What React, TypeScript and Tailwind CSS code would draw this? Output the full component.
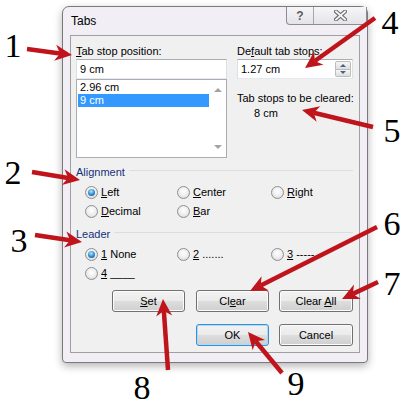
import React from "react";

type Pt = { x1: number; y1: number; x2: number; y2: number };

const ARROWS: Pt[] = [
  { x1: 27, y1: 49, x2: 72, y2: 55 },
  { x1: 32, y1: 172, x2: 80, y2: 180 },
  { x1: 35, y1: 235, x2: 82, y2: 242 },
  { x1: 375, y1: 18, x2: 305, y2: 68 },
  { x1: 373, y1: 127, x2: 302, y2: 110 },
  { x1: 377, y1: 227, x2: 250, y2: 291 },
  { x1: 378, y1: 282, x2: 342, y2: 299 },
  { x1: 168, y1: 370, x2: 163, y2: 299 },
  { x1: 282, y1: 373, x2: 248, y2: 332 },
];

const NUMBERS = [
  { n: "1", cx: 13, top: 29 },
  { n: "2", cx: 13, top: 156 },
  { n: "3", cx: 19, top: 224 },
  { n: "4", cx: 390, top: 6 },
  { n: "5", cx: 392, top: 114 },
  { n: "6", cx: 392, top: 207 },
  { n: "7", cx: 392, top: 267 },
  { n: "8", cx: 142, top: 371 },
  { n: "9", cx: 296, top: 367 },
];

function Arrow({ x1, y1, x2, y2 }: Pt) {
  const dx = x2 - x1;
  const dy = y2 - y1;
  const len = Math.hypot(dx, dy);
  const ux = dx / len;
  const uy = dy / len;
  const nx = -uy;
  const ny = ux;
  const L = 17;
  const W = 8;
  const bx = x2 - ux * L;
  const by = y2 - uy * L;
  const mx = x2 - ux * (L - 5);
  const my = y2 - uy * (L - 5);
  const pts = [
    [x2, y2],
    [bx + nx * W, by + ny * W],
    [mx, my],
    [bx - nx * W, by - ny * W],
  ]
    .map((p) => p.join(","))
    .join(" ");
  return (
    <g>
      <line x1={x1} y1={y1} x2={mx} y2={my} stroke="#c0141c" strokeWidth="4.5" strokeLinecap="butt" />
      <polygon points={pts} fill="#c0141c" />
    </g>
  );
}

function Radio({ checked }: { checked?: boolean }) {
  return (
    <span className="w-[13px] h-[13px] rounded-full border border-[#8e8f8f] bg-[radial-gradient(circle_at_50%_40%,#ffffff,#ececec_55%,#cdcdcd)] flex items-center justify-center shrink-0">
      {checked && (
        <span className="w-[7px] h-[7px] rounded-full bg-[radial-gradient(circle_at_45%_35%,#b5e8fc,#2a8ad4_55%,#0c3f70)]" />
      )}
    </span>
  );
}

function Option({ checked, children }: { checked?: boolean; children: React.ReactNode }) {
  return (
    <div className="flex items-center gap-[3px]">
      <Radio checked={checked} />
      <span className="leading-[15px]">{children}</span>
    </div>
  );
}

function Btn({ children, def, className }: { children: React.ReactNode; def?: boolean; className?: string }) {
  return (
    <div
      className={
        "h-[22px] flex items-center justify-center rounded-[3px] border bg-[linear-gradient(180deg,#f2f2f2_0%,#ebebeb_48%,#dddddd_52%,#cfcfcf_100%)] " +
        (def
          ? "border-[#3c8fd1] shadow-[inset_0_0_0_1px_#a6dcf8] "
          : "border-[#707070] shadow-[inset_0_0_0_1px_#fcfcfc] ") +
        (className ?? "")
      }
    >
      {children}
    </div>
  );
}

function Header({ label }: { label: string }) {
  return (
    <div className="h-[16px] flex items-center">
      <span className="leading-[16px] text-[#15307a]">{label}</span>
      <div className="flex-1 h-px bg-[#d5dfe5] ml-[4px] mb-[3px]" />
    </div>
  );
}

export default function App() {
  return (
    <div className="relative w-[411px] h-[409px] bg-white overflow-hidden font-['Liberation_Sans',Arial,sans-serif] text-[11px] text-black">
      <div className="pl-[62px] pt-[6px]">
        {/* window frame */}
        <div className="relative w-[306px] h-[357px] rounded-t-[7px] rounded-b-[4px] border border-[#7a7a7a] bg-[#f1eff5] shadow-[0_3px_8px_rgba(0,0,0,0.3)]">
          <div className="h-[28px] pl-[8px] pt-[7px] leading-[15px] text-[12px]">Tabs</div>

          {/* caption buttons */}
          <div className="absolute top-0 right-0 h-[18px] flex border border-t-0 border-[#8d8d8d] rounded-b-[4px] overflow-hidden bg-[linear-gradient(180deg,#f6f6f8,#e4e3ea)]">
            <div className="w-[27px] flex items-center justify-center border-r border-[#a6a6a6] font-bold text-[12px] text-[#5c5c5c] leading-none">
              ?
            </div>
            <div className="w-[52px] flex items-center justify-center">
              <svg width="13" height="11" viewBox="0 0 13 11">
                <path d="M2 1.5 L11 9.5 M11 1.5 L2 9.5" stroke="#6e6e6e" strokeWidth="4" strokeLinecap="square" />
                <path d="M2 1.5 L11 9.5 M11 1.5 L2 9.5" stroke="#f4f4f4" strokeWidth="1.8" strokeLinecap="square" />
              </svg>
            </div>
          </div>

          {/* client area */}
          <div className="ml-[7px] w-[290px] h-[318px] border border-[#a0a0a0] bg-[#f0f0f0] pl-[5px] pr-[6px] pt-[7px]">
            <div className="flex">
              <div className="w-[151px]">
                <div className="h-[16px] leading-[16px]">
                  <u>T</u>ab stop position:
                </div>
                <div className="h-[20px] border border-[#abadb3] border-b-[#e3e9ef] border-x-[#dbdfe6] bg-white pl-[3px] leading-[18px]">
                  9 cm
                </div>
                <div className="h-[79px] border border-[#abadb3] bg-white flex">
                  <div className="flex-1 pt-[1px] pl-[1px]">
                    <div className="h-[13px] leading-[13px] pl-[2px]">2.96 cm</div>
                    <div className="h-[13px] leading-[13px] pl-[2px] bg-[#3399ff] text-white">9 cm</div>
                  </div>
                  <div className="w-[17px] flex flex-col items-center justify-between py-[8px]">
                    <span className="w-0 h-0 border-x-[4px] border-x-transparent border-b-[4px] border-b-[#a3a3a3]" />
                    <span className="w-0 h-0 border-x-[4px] border-x-transparent border-t-[4px] border-t-[#a3a3a3]" />
                  </div>
                </div>
              </div>

              <div className="ml-[10px] w-[116px]">
                <div className="h-[16px] leading-[16px]">
                  De<u>f</u>ault tab stops:
                </div>
                <div className="h-[20px] border border-[#abadb3] border-b-[#e3e9ef] border-x-[#dbdfe6] bg-white flex">
                  <span className="flex-1 pl-[3px] leading-[18px]">1.27 cm</span>
                  <div className="w-[16px] my-[1px] mr-[1px] flex flex-col">
                    <div className="flex-1 border border-[#bcbcbc] rounded-t-[2px] bg-[linear-gradient(#f6f6f6,#dedede)] flex items-center justify-center">
                      <span className="w-0 h-0 border-x-[3px] border-x-transparent border-b-[3px] border-b-[#4d6185]" />
                    </div>
                    <div className="flex-1 border border-t-0 border-[#bcbcbc] rounded-b-[2px] bg-[linear-gradient(#f6f6f6,#dedede)] flex items-center justify-center">
                      <span className="w-0 h-0 border-x-[3px] border-x-transparent border-t-[3px] border-t-[#4d6185]" />
                    </div>
                  </div>
                </div>
                <div className="mt-[11px] h-[16px] leading-[16px] whitespace-nowrap">Tab stops to be cleared:</div>
                <div className="h-[15px] leading-[15px] pl-[17px]">8 cm</div>
              </div>
            </div>

            {/* Alignment */}
            <div className="mt-[6px]">
              <Header label="Alignment" />
            </div>
            <div className="mt-[3px] pl-[9px] grid grid-cols-[92px_94px_1fr]">
              <div className="h-[19px] flex items-center">
                <Option checked>
                  <u>L</u>eft
                </Option>
              </div>
              <div className="h-[19px] flex items-center">
                <Option>
                  <u>C</u>enter
                </Option>
              </div>
              <div className="h-[19px] flex items-center">
                <Option>
                  <u>R</u>ight
                </Option>
              </div>
              <div className="h-[19px] flex items-center">
                <Option>
                  <u>D</u>ecimal
                </Option>
              </div>
              <div className="h-[19px] flex items-center">
                <Option>
                  <u>B</u>ar
                </Option>
              </div>
            </div>

            {/* Leader */}
            <div className="mt-[5px]">
              <Header label="Leader" />
            </div>
            <div className="mt-[3px] pl-[9px] grid grid-cols-[92px_94px_1fr]">
              <div className="h-[19px] flex items-center">
                <Option checked>
                  <u>1</u> None
                </Option>
              </div>
              <div className="h-[19px] flex items-center">
                <Option>
                  <u>2</u> .......
                </Option>
              </div>
              <div className="h-[19px] flex items-center">
                <Option>
                  <u>3</u> -----
                </Option>
              </div>
              <div className="h-[19px] flex items-center">
                <Option>
                  <u>4</u> ____
                </Option>
              </div>
            </div>

            {/* buttons */}
            <div className="mt-[7px] flex">
              <Btn className="ml-[36px] w-[73px]">
                <span>
                  <u>S</u>et
                </span>
              </Btn>
              <Btn className="ml-[11px] w-[73px]">
                <span>
                  Cl<u>e</u>ar
                </span>
              </Btn>
              <Btn className="ml-[10px] w-[74px]">
                <span>
                  Clear <u>A</u>ll
                </span>
              </Btn>
            </div>
            <div className="mt-[12px] flex">
              <Btn def className="ml-[120px] w-[73px]">
                OK
              </Btn>
              <Btn className="ml-[10px] w-[74px]">Cancel</Btn>
            </div>
          </div>
        </div>
      </div>

      {/* annotations */}
      <svg className="absolute inset-0 pointer-events-none" width="411" height="409">
        {ARROWS.map((a, i) => (
          <Arrow key={i} {...a} />
        ))}
      </svg>
      {NUMBERS.map((d) => (
        <span
          key={d.n}
          className="absolute w-[20px] text-center font-['Liberation_Serif',serif] text-[34px] leading-none text-black"
          style={{ left: d.cx - 10, top: d.top }}
        >
          {d.n}
        </span>
      ))}
    </div>
  );
}
